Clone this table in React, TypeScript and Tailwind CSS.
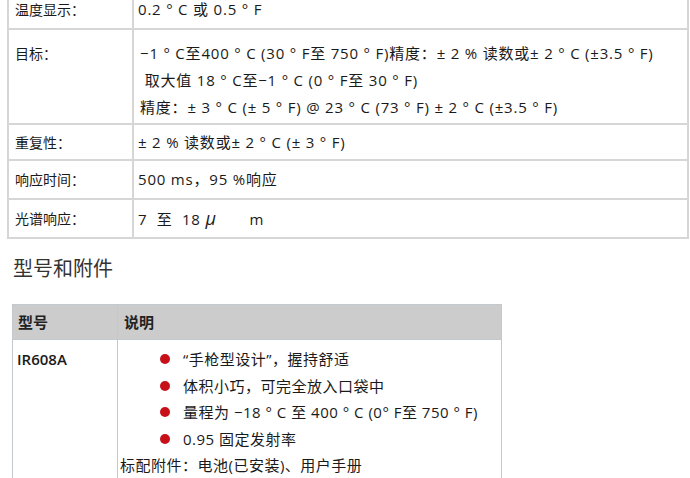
const font = "font-['Open_Sans','Noto_Sans_CJK_SC',sans-serif]";

type Spec = { label: string; lines: React.ReactNode[]; h: string };

const specs: Spec[] = [
  { label: "温度显示：", lines: ["0.2 ° C 或 0.5 ° F"], h: "h-[38px]" },
  {
    label: "目标：",
    lines: [
      "−1 ° C至400 ° C (30 ° F至 750 ° F)精度：± 2 % 读数或± 2 ° C (±3.5 ° F)",
      " 取大值 18 ° C至−1 ° C (0 ° F至 30 ° F)",
      "精度：± 3 ° C (± 5 ° F) @ 23 ° C (73 ° F) ± 2 ° C (±3.5 ° F)",
    ],
    h: "h-[95px]",
  },
  { label: "重复性：", lines: ["± 2 % 读数或± 2 ° C (± 3 ° F)"], h: "h-[36px]" },
  { label: "响应时间：", lines: ["500 ms，95 %响应"], h: "h-[39px]" },
  {
    label: "光谱响应：",
    lines: [
      <>
        {"7  至  18 "}
        <span className="italic text-[18px]">μ</span>
        {"       m"}
      </>,
    ],
    h: "h-[39px]",
  },
];

const bullets = [
  "“手枪型设计”，握持舒适",
  "体积小巧，可完全放入口袋中",
  "量程为 −18 ° C 至 400 ° C (0° F至 750 ° F)",
  "0.95 固定发射率",
];

export default function App() {
  return (
    <div className={`w-[690px] h-[478px] overflow-hidden bg-white text-[#1a1a1a] text-[14px] ${font}`}>
      <div className="-mt-[10px] ml-[7px] mr-[1px] border-2 border-t-0 border-[#d6d6d6]">
        {specs.map((s, i) => (
          <div
            key={i}
            className={`flex ${s.h} ${i > 0 ? "border-t-2 border-[#d6d6d6]" : ""}`}
          >
            <div className="w-[125px] shrink-0 border-r-2 border-[#d6d6d6] pl-[6px] flex items-start">
              <span className={i === 1 ? "mt-[10px] leading-[27px]" : "self-center"}>{s.label}</span>
            </div>
            <div
              className={`flex flex-col text-[15px] tracking-[0.8px] ${i === 1 ? "pt-[10px] pl-[6px]" : "pl-[4px] justify-center"}`}
            >
              {s.lines.map((l, j) => (
                <div key={j} className="leading-[27px] whitespace-pre">
                  {l}
                </div>
              ))}
            </div>
          </div>
        ))}
      </div>

      <h2 className="mt-[17px] ml-[13px] text-[20px] leading-[26px] text-[#333] font-normal">型号和附件</h2>

      <div className="mt-[22px] ml-[12px] w-[490px] border border-[#c4c9d0] text-[15px]">
        <div className="flex h-[35px] bg-[#cccccc] border-b border-[#c4c9d0] font-semibold text-[#222]">
          <div className="w-[105px] shrink-0 border-r border-[#c4c9d0] pl-[5px] flex items-center">型号</div>
          <div className="pl-[6px] flex items-center">说明</div>
        </div>
        <div className="flex h-[145px]">
          <div className="w-[105px] shrink-0 border-r border-[#c4c9d0] pl-[4px] pt-[6px] font-semibold leading-[27px]">
            IR608A
          </div>
          <div className="pl-[2px] pt-[6px] tracking-[0.5px]">
            {bullets.map((b, i) => (
              <div key={i} className="flex items-center h-[26.5px] pl-[40px]">
                <span className="w-[10px] h-[10px] rounded-full bg-[#c8101a] shrink-0" />
                <span className="ml-[13px] whitespace-pre">{b}</span>
              </div>
            ))}
            <div className="leading-[26.5px]">标配附件：电池(已安装)、用户手册</div>
          </div>
        </div>
      </div>
    </div>
  );
}
